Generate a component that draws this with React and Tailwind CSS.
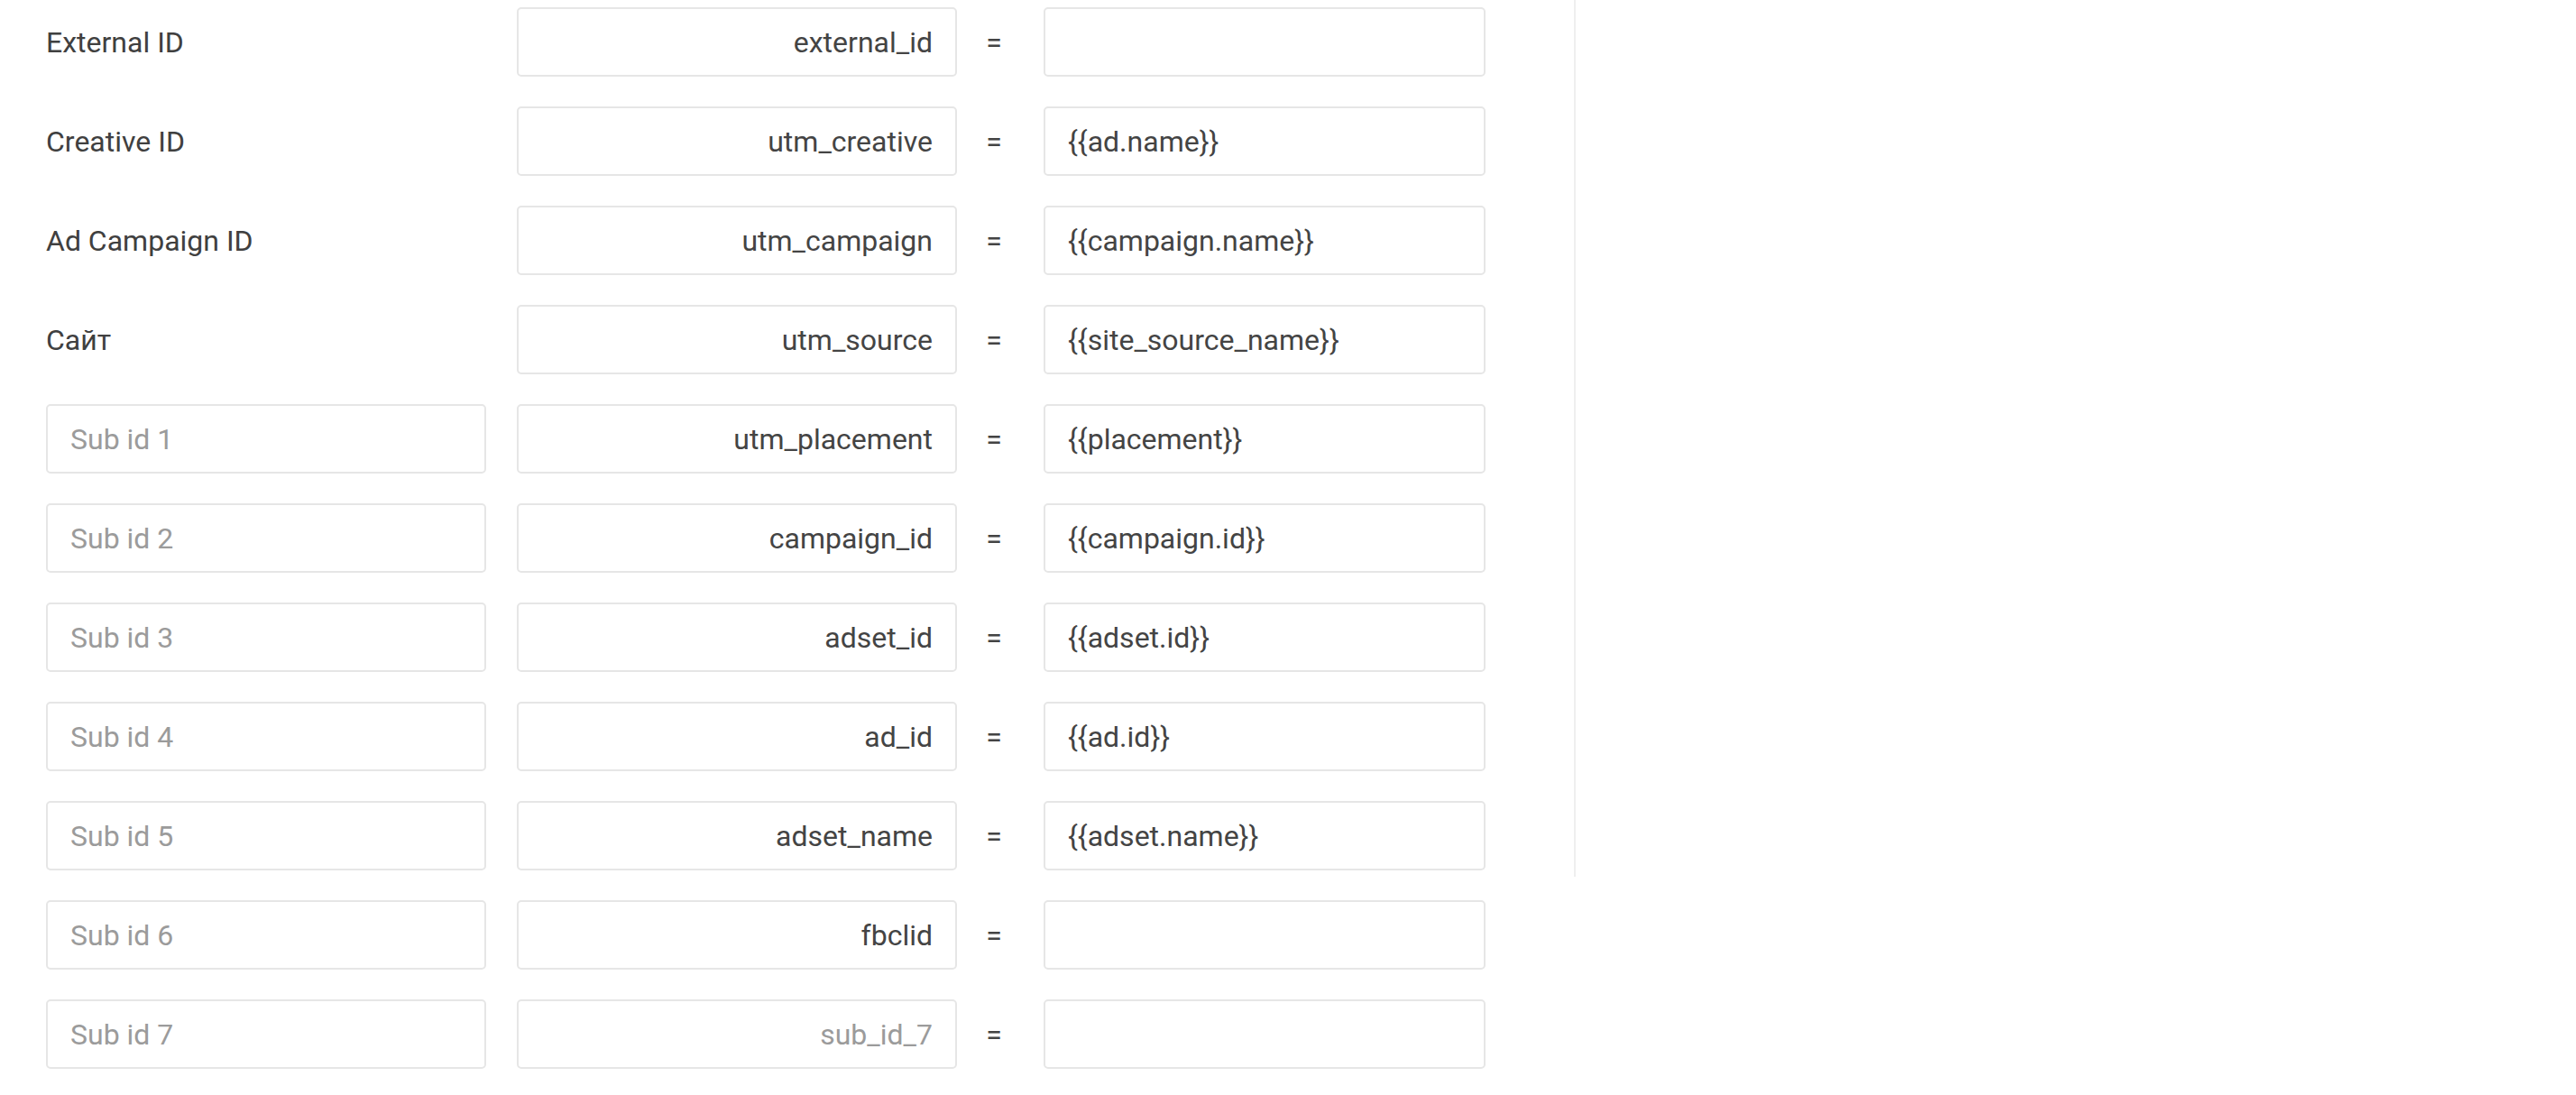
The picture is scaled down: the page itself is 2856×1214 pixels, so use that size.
const ROWS = [
  { label: 'External ID', key: 'external_id', value: '' },
  { label: 'Creative ID', key: 'utm_creative', value: '{{ad.name}}' },
  { label: 'Ad Campaign ID', key: 'utm_campaign', value: '{{campaign.name}}' },
  { label: 'Сайт', key: 'utm_source', value: '{{site_source_name}}' },
  { sub: 'Sub id 1', key: 'utm_placement', value: '{{placement}}' },
  { sub: 'Sub id 2', key: 'campaign_id', value: '{{campaign.id}}' },
  { sub: 'Sub id 3', key: 'adset_id', value: '{{adset.id}}' },
  { sub: 'Sub id 4', key: 'ad_id', value: '{{ad.id}}' },
  { sub: 'Sub id 5', key: 'adset_name', value: '{{adset.name}}' },
  { sub: 'Sub id 6', key: 'fbclid', value: '' },
  { sub: 'Sub id 7', key: '', keyPlaceholder: 'sub_id_7', value: '' },
];

const campo =
  'w-full h-[77px] px-[25px] bg-white border-2 border-[#e6e6e6] rounded-[5px] text-[32px] text-[#444] placeholder:text-[#9b9b9b] focus:outline-none';

export default function App() {
  return (
    <div className="min-h-screen bg-white flex items-start font-['Roboto',sans-serif]">
      {/* Parâmetros */}
      <div className="w-[1745px] shrink-0 pl-[51px] pt-[8px] flex flex-col gap-[33px]">
        {ROWS.map((r, i) => (
          <div key={i} className="flex items-center">
            <div className="w-[488px] shrink-0">
              {r.label ? (
                <span className="text-[32px] text-[#404040]">{r.label}</span>
              ) : (
                <input className={campo} placeholder={r.sub} />
              )}
            </div>
            <div className="w-[488px] shrink-0 ml-[34px]">
              <input
                className={`${campo} text-right`}
                defaultValue={r.key}
                placeholder={r.keyPlaceholder}
              />
            </div>
            <div className="w-[96px] shrink-0 text-center pr-[14px] text-[32px] text-[#444]">=</div>
            <div className="w-[490px] shrink-0">
              <input className={campo} defaultValue={r.value} />
            </div>
          </div>
        ))}
      </div>

      <div className="flex-1 h-[972px] border-l-2 border-[#efefef]" />
    </div>
  );
}
